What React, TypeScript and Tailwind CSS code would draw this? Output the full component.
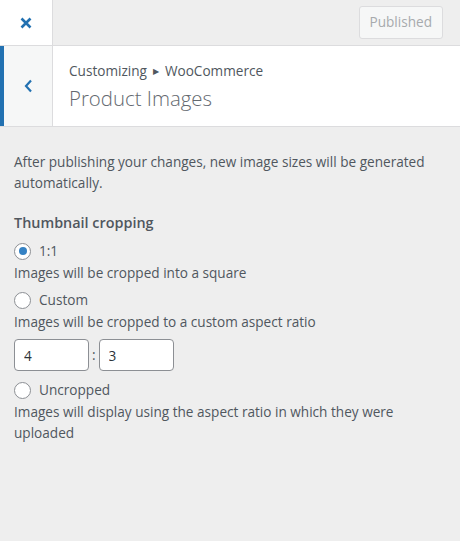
const FONT = "font-['Segoe_UI','Open_Sans',sans-serif]";

function Radio({ checked }: { checked?: boolean }) {
  return (
    <span className="flex h-[17px] w-[17px] shrink-0 items-center justify-center rounded-full border border-[#8c8f94] bg-white">
      {checked && <span className="h-2 w-2 rounded-full bg-[#3582c4]" />}
    </span>
  );
}

function Option({ label, desc, checked }: { label: string; desc: string; checked?: boolean }) {
  return (
    <div>
      <label className="flex items-center gap-[8px] leading-[20px]">
        <Radio checked={checked} />
        <span>{label}</span>
      </label>
      <p className="mt-[1px] leading-[21px]">{desc}</p>
    </div>
  );
}

export default function App() {
  return (
    <div className={`h-[541px] w-[460px] bg-[#eeeeee] text-[13.6px] text-[#50575e] ${FONT}`}>
      <div className="flex h-[46px] items-stretch border-b border-[#dcdcde]">
        <button className="flex w-[53px] items-center justify-center border-r border-[#dcdcde] bg-white text-[#2271b1]">
          <svg width="12" height="12" viewBox="0 0 12 12" fill="none" stroke="currentColor" strokeWidth="2.6">
            <path d="M1.5 1.5l9 9M10.5 1.5l-9 9" />
          </svg>
        </button>
        <div className="flex flex-1 items-center justify-end pr-[17px]">
          <button className="h-[33px] rounded-[3px] border border-[#dcdcde] bg-[#f6f7f7] px-[10px] text-[13.6px] text-[#a7aaad]">
            Published
          </button>
        </div>
      </div>

      <div className="flex h-[81px] border-b border-[#dcdcde] bg-white">
        <div className="flex w-[53px] items-center justify-center border-l-4 border-r border-l-[#2271b1] border-r-[#dcdcde] bg-[#f6f7f7] text-[#2271b1]">
          <svg width="9" height="14" viewBox="0 0 9 14" fill="none" stroke="currentColor" strokeWidth="2.2">
            <path d="M7 1.5L2 7l5 5.5" />
          </svg>
        </div>
        <div className="flex flex-col justify-center pl-[16px] pt-[2px]">
          <div className="flex items-center gap-[6px] leading-[18px] text-[#50575e]">
            <span>Customizing</span>
            <span className="text-[8px]">▶</span>
            <span>WooCommerce</span>
          </div>
          <h2 className="mt-[4px] text-[20.4px] font-light leading-[28px] text-[#646970]">Product Images</h2>
        </div>
      </div>

      <div className="px-[14px] pt-[24px]">
        <p className="leading-[21px]">After publishing your changes, new image sizes will be generated automatically.</p>

        <h3 className="mt-[20px] text-[14.4px] font-semibold leading-[20px] text-[#50575e]">Thumbnail cropping</h3>

        <div className="mt-[8px] flex flex-col gap-[7px]">
          <Option checked label="1:1" desc="Images will be cropped into a square" />
          <div>
            <Option label="Custom" desc="Images will be cropped to a custom aspect ratio" />
            <div className="mb-[2px] mt-[7px] flex items-center gap-[3px]">
              <input defaultValue="4" className="h-[32px] w-[75px] rounded-[4px] border border-[#8c8f94] bg-white px-[9px] text-[13.6px] text-[#2c3338] outline-none" />
              <span>:</span>
              <input defaultValue="3" className="h-[32px] w-[75px] rounded-[4px] border border-[#8c8f94] bg-white px-[9px] text-[13.6px] text-[#2c3338] outline-none" />
            </div>
          </div>
          <Option label="Uncropped" desc="Images will display using the aspect ratio in which they were uploaded" />
        </div>
      </div>
    </div>
  );
}
